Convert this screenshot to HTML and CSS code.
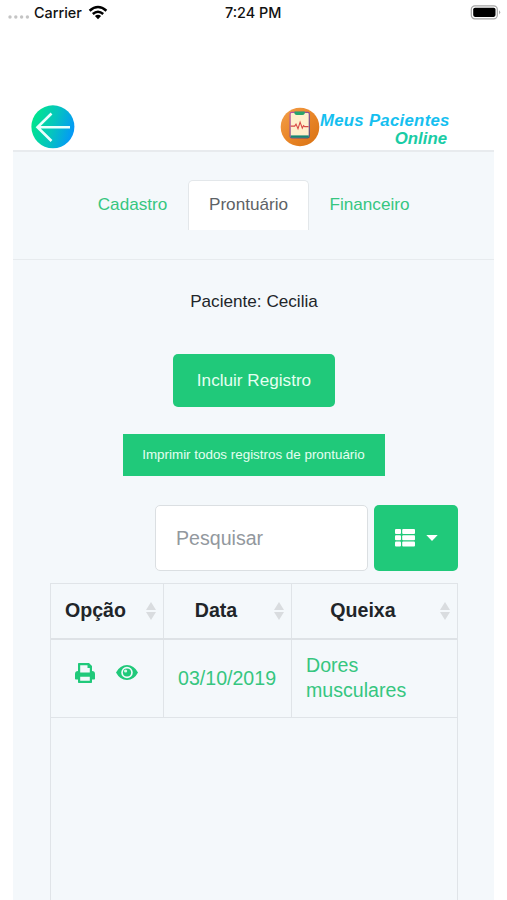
FILE: index.html
```html
<!DOCTYPE html>
<html lang="pt-BR">
<head>
<meta charset="utf-8">
<title>Meus Pacientes Online</title>
<link rel="stylesheet" href="styles.css">
</head>
<body>
<div class="status">
  <div class="status-left">
    <svg class="signal" width="22" height="4" viewBox="0 0 22 4"><g fill="#c4c4c4"><circle cx="2" cy="2" r="1.7"/><circle cx="7.8" cy="2" r="1.7"/><circle cx="13.6" cy="2" r="1.7"/><circle cx="19.4" cy="2" r="1.7"/></g></svg>
    <span class="carrier">Carrier</span>
    <svg class="wifi" width="20" height="15" viewBox="0 0 20 15"><g fill="none" stroke="#000" stroke-width="2.5"><path d="M1.6 5.7Q10-1.7 18.4 5.7"/><path d="M4.8 9Q10 4.4 15.2 9"/></g><path d="M6.9 11.1Q10 8.5 13.1 11.1L10 14.3Z"/></svg>
  </div>
  <span class="clock">7:24 PM</span>
  <svg class="battery" width="31" height="15" viewBox="0 0 31 15"><rect x="1.3" y=".8" width="26" height="13" rx="3.6" fill="#fff" stroke="#a5a5a5" stroke-width="1.2"/><rect x="3.2" y="2.7" width="22.3" height="9.2" rx="1.8"/><path d="M29.2 5.2q2 2.1 0 4.2z" fill="#999"/></svg>
</div>
<header class="header">
  <svg class="back" width="44" height="44" viewBox="0 0 44 44"><defs><linearGradient id="bg" x1="0" y1=".35" x2="1" y2=".65"><stop offset="0" stop-color="#00e78b"/><stop offset=".5" stop-color="#05c5bd"/><stop offset="1" stop-color="#0495fc"/></linearGradient></defs><circle cx="21.9" cy="21.8" r="21.5" fill="url(#bg)"/><path d="M39 22.2H6.5M20.5 8.5L6.5 22.2L20.5 36" fill="none" stroke="#e9fffd" stroke-width="2.6"/></svg>
  <div class="brand">
    <svg width="40" height="40" viewBox="0 0 40 40"><defs><linearGradient id="or" x1="0" y1="0" x2="1" y2="1"><stop offset="0" stop-color="#f3a04b"/><stop offset=".5" stop-color="#e98628"/><stop offset="1" stop-color="#d87112"/></linearGradient><linearGradient id="ed" x1="0" y1="0" x2="1" y2="1"><stop offset="0" stop-color="#be54a5"/><stop offset="1" stop-color="#554878"/></linearGradient></defs><circle cx="20" cy="20" r="19.3" fill="url(#or)"/><g transform="translate(-.7 -.9)"><rect x="10.8" y="6.3" width="19.2" height="25.4" rx="1.5" fill="#ffefcb" stroke="url(#ed)" stroke-width="1.2"/><path d="M15.2 5.5h10.2v2.2q-1 1.3-2.3 1.3h-5.6q-1.3 0-2.3-1.3z" fill="#28a56b"/><path d="M11.5 29.3h18v2.3h-18z" fill="#168774"/><path d="M11.4 20h4l1.3-2 2 4.5 2.1-6.5 2.2 6 1.3-2.5 1 1h4" fill="none" stroke="#d74845" stroke-width="1.1"/></g></svg>
    <div class="brand-name"><span class="brand-top">Meus Pacientes</span><span class="brand-bottom">Online</span></div>
  </div>
</header>
<main class="panel">
  <nav class="tabs"><a class="tab tab-first">Cadastro</a><a class="tab tab-active">Prontuário</a><a class="tab tab-last">Financeiro</a></nav>
  <section class="content">
    <p class="patient">Paciente: Cecilia</p>
    <button class="include">Incluir Registro</button>
    <button class="print-all">Imprimir todos registros de prontuário</button>
    <div class="toolbar">
      <input class="search" placeholder="Pesquisar">
      <button class="columns">
        <svg width="20" height="18" viewBox="0 0 20 18" fill="#fff"><rect width="6" height="5" rx="1"/><rect x="7.2" width="12.8" height="5" rx="1"/><rect y="6.2" width="6" height="5" rx="1"/><rect x="7.2" y="6.2" width="12.8" height="5" rx="1"/><rect y="12.4" width="6" height="5" rx="1"/><rect x="7.2" y="12.4" width="12.8" height="5" rx="1"/></svg>
        <svg width="12" height="6" viewBox="0 0 12 6"><path d="M.3 0h11.4L6 6z" fill="#fff"/></svg>
      </button>
    </div>
    <div class="table">
      <div class="row head">
        <div class="cell">Opção<svg class="sort" width="10" height="18" viewBox="0 0 10 18"><path d="M5 0l5 8H0zM0 10h10l-5 8z"/></svg></div>
        <div class="cell">Data<svg class="sort" width="10" height="18" viewBox="0 0 10 18"><path d="M5 0l5 8H0zM0 10h10l-5 8z"/></svg></div>
        <div class="cell">Queixa<svg class="sort" width="10" height="18" viewBox="0 0 10 18"><path d="M5 0l5 8H0zM0 10h10l-5 8z"/></svg></div>
      </div>
      <div class="row record">
        <div class="cell actions">
          <svg width="20" height="20" viewBox="0 0 20 20"><path fill="#20c97a" fill-rule="evenodd" d="M3.8 0H14l3 3v5q3 .2 3 3v4.7q0 .8-.8.8H17v2.7q0 .8-.8.8H3.8Q3 20 3 19.2v-2.7H.8q-.8 0-.8-.8V11q0-2.8 3-3V.8Q3 0 3.8 0zM5.2 2.2V9.5h9.6V5h-2.3V2.2zM5.2 13.8v4h9.6v-4z"/></svg>
          <svg width="22" height="15" viewBox="0 0 22 15"><path fill="#20c97a" fill-rule="evenodd" d="M0 7.5Q4 0 11 0t11 7.5Q18 15 11 15T0 7.5zM11 1.7a5.8 5.8 0 1 0 0 11.6 5.8 5.8 0 1 0 0-11.6z"/><circle cx="11" cy="7.5" r="4.1" fill="#20c97a"/><circle cx="9.6" cy="6" r="1.6" fill="#d8f6e8"/></svg>
        </div>
        <div class="cell date">03/10/2019</div>
        <div class="cell complaint">Dores musculares</div>
      </div>
    </div>
  </section>
</main>
</body>
</html>
```
FILE: styles.css
```css
* { box-sizing: border-box; }
body {
  margin: 0;
  height: 900px;
  overflow: hidden;
  display: flex;
  flex-direction: column;
  background: #fff;
  color: #212529;
  font-family: "Liberation Sans", Arial, sans-serif;
  font-size: 17.15px;
}
button { border: 0; margin: 0; padding: 0; background: #20c97a; color: #e5fff1; font-family: inherit; }
svg { display: block; flex-shrink: 0; }

.status {
  display: grid;
  grid-template-columns: 217px 1fr 31px;
  height: 26px;
  align-items: center;
  padding: 0 6px 1px 8px;
  font-family: Inter, sans-serif;
  font-size: 14.4px;
  font-weight: 500;
  color: #111;
}
.status-left { display: flex; align-items: center; }
.signal { margin-top: 8px; }
.carrier { width: 50px; margin-left: 4px; }
.wifi { margin-left: 4px; }

.header {
  display: flex;
  justify-content: space-between;
  align-items: flex-start;
  height: 124px;
  padding: 79px 57px 0 31px;
}
.brand { display: flex; padding-top: 2px; }
.brand-name {
  display: flex;
  flex-direction: column;
  width: 130px;
  padding-top: 5px;
  font-size: 16.8px;
  font-weight: bold;
  font-style: italic;
  line-height: 18px;
  letter-spacing: .27px;
  white-space: nowrap;
}
.brand-top { color: #16bff0; }
.brand-bottom { align-self: flex-end; margin-right: 3px; color: #19cca5; letter-spacing: 0; }

.panel {
  flex: 1;
  display: flex;
  flex-direction: column;
  margin: 0 13px;
  background: #f4f8fb;
  border-top: 2px solid #e8ebee;
}
.tabs {
  display: flex;
  height: 108px;
  padding: 28px 0 0 65px;
  border-bottom: 1px solid #e7ebee;
}
.tab {
  display: flex;
  align-items: center;
  justify-content: center;
  height: 50px;
  padding-bottom: 2px;
  color: #36c680;
}
.tab-first { width: 110px; padding-right: 1px; }
.tab-active { width: 121px; background: #fff; border: 1px solid #e3e7ea; border-bottom: 0; border-radius: 5px 5px 0 0; color: #5d6266; }
.tab-last { width: 121px; }

.content {
  flex: 1;
  display: flex;
  flex-direction: column;
  align-items: center;
  padding: 0 36px 0 37px;
}
.patient { margin: 31px 0 43px; line-height: 20px; }
.include { width: 162px; height: 53px; border-radius: 5px; font-size: 17.15px; }
.print-all { width: 262px; height: 42px; margin-top: 27px; padding: 0 1px 2px 0; font-size: 13.4px; }
.toolbar { align-self: flex-end; display: flex; gap: 6px; margin-top: 29px; }
.search {
  width: 213px;
  height: 66px;
  padding: 0 20px;
  border: 1px solid #dbdfe2;
  border-radius: 5px;
  background: #fff;
  font-family: inherit;
  font-size: 19.6px;
}
.search::placeholder { color: #92989e; opacity: 1; }
.columns {
  display: flex;
  align-items: center;
  justify-content: center;
  gap: 11px;
  width: 84px;
  height: 66px;
  border-radius: 5px;
}

.table {
  flex: 1;
  align-self: stretch;
  display: flex;
  flex-direction: column;
  margin-top: 12px;
  border: 1px solid #e0e4e8;
  border-bottom: 0;
  font-size: 19.6px;
}
.row { display: grid; grid-template-columns: 113px 128px 1fr; }
.cell { display: flex; align-items: center; border-right: 1px solid #e0e4e8; }
.cell:last-child { border-right: 0; }
.head { height: 56px; border-bottom: 2px solid #dee2e6; font-weight: bold; }
.head .cell { position: relative; justify-content: center; padding: 0 23px 2px 0; }
.sort { position: absolute; right: 7px; top: 18px; fill: #d9dcdf; }
.record { height: 78px; border-bottom: 1px solid #e0e4e8; color: #36c680; }
.actions { gap: 21px; padding: 0 0 12px 24px; }
.date { padding: 0 0 1px 14px; }
.complaint { padding: 0 40px 1px 14px; line-height: 25px; }
```
